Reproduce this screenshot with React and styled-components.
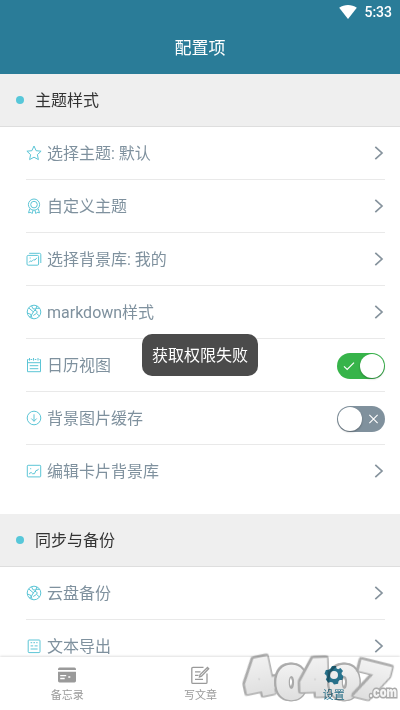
import React from 'react';
import styled, { createGlobalStyle } from 'styled-components';

const ICONS = {
	star: <path d="M8 1l2.100 4.700 5 .5-3.700 3.400 1 5L8 12.200l-4.400 2.400 1-5L.9 6.200l5-.5z" />,
	award: (
		<>
			<circle cx="8" cy="6.6" r="5.6" />
			<circle cx="8" cy="6.6" r="3.3" />
			<path d="M3.800 10.700l-1.300 4.100 2.400-.5 1.200 1.300 1-3.500M12.200 10.700l1.300 4.100-2.400-.5-1.200 1.300-1-3.500" />
		</>
	),
	gallery: (
		<>
			<rect x="1" y="4.4" width="11.6" height="9.8" rx="1.2" />
			<path d="M3.200 2.300h10.300c.9 0 1.300.5 1.300 1.300V12M3.200 11.400l1.200-1.500 1.500.5 2-2 1 .8 2-2.400" />
			<path d="M3.700 7h1" />
		</>
	),
	globe: (
		<>
			<circle cx="8" cy="8" r="6.8" />
			<path d="M2.800 4l5 4.200M5.500 1.800l1.500 3 3 .3.600-3M13.500 4.400l-3-.2-3.400 4L5 12l-1.800 1M9 6.200l2.300 1.500-.8 1.700 2.800 2.500M1.500 9l3.500 1.500 1 3.500M7.200 11.500l3.200-2" />
		</>
	),
	calendar: (
		<>
			<path d="M2.500 2.500h-1v12.200h13V2.500h-1M4.600 2.500h1.600M8.800 2.500h1.500M1.500 5.700h13M3.700 8.700h8.600M3.700 11.700h8.600" />
			<path d="M3.500 1v2.600M7.500 1v2.600M12 1v2.600" />
		</>
	),
	download: (
		<>
			<circle cx="8" cy="8" r="6.8" />
			<path d="M8 4.300v7M5.300 8.500L8 11.300l2.700-2.800" />
		</>
	),
	image: (
		<>
			<rect x="1.3" y="2.3" width="13.400" height="11.600" rx=".8" />
			<path d="M3.600 11.200v-1l1.600-.7 1.300 1.200h2L10 7.500l1.500-.2 1-1.500M4.200 5.700h1" />
		</>
	),
	text: (
		<>
			<rect x="2.2" y="2" width="11.800" height="12.600" rx=".8" />
			<path d="M4.600 4.700h1.600M7.400 4.700H9M10.200 4.700h1.400M4.600 7.900h2.600M8.600 7.900h3M4.600 11h7" />
		</>
	),
};

const sections = [
	{
		title: '主题样式',
		items: [
			{ icon: 'star', label: '选择主题: 默认' },
			{ icon: 'award', label: '自定义主题' },
			{ icon: 'gallery', label: '选择背景库: 我的' },
			{ icon: 'globe', label: 'markdown样式' },
			{ icon: 'calendar', label: '日历视图', toggle: true, on: true },
			{ icon: 'download', label: '背景图片缓存', toggle: true, on: false },
			{ icon: 'image', label: '编辑卡片背景库' },
		],
	},
	{
		title: '同步与备份',
		items: [
			{ icon: 'globe', label: '云盘备份' },
			{ icon: 'text', label: '文本导出' },
		],
	},
];

const Switch = ({ on }) => (
	<Track $on={on}>
		<Mark $on={on} viewBox="0 0 12 12">
			{on ? <path d="M1 6.300l3.200 3.200L11 2.700" /> : <path d="M1.500 1.500l9 9M10.500 1.500l-9 9" />}
		</Mark>
		<Knob />
	</Track>
);

const SettingRow = ({ icon, label, toggle, on, last }) => (
	<Row $last={last}>
		<RowIcon viewBox="0 0 16 16">{ICONS[icon]}</RowIcon>
		<Label>{label}</Label>
		{toggle ? (
			<Switch on={on} />
		) : (
			<Chevron viewBox="0 0 10 14">
				<path d="M1.300 .8L8 7l-6.700 6.200" />
			</Chevron>
		)}
	</Row>
);

const Watermark = () => (
	<Logo viewBox="0 0 160 56">
		<defs>
			<linearGradient id="shine" x1="0" y1="0" x2="0" y2="1">
				<stop offset="0" stopColor="#f6f6f6" />
				<stop offset="1" stopColor="#dadada" />
			</linearGradient>
		</defs>
		<Digit transform="translate(8 43) rotate(-12) scale(.96 1.05)">4</Digit>
		<Digit transform="translate(37 44) scale(.9 .95)">0</Digit>
		<Digit transform="translate(61 41) rotate(-2) scale(.96 1.05)">4</Digit>
		<Digit transform="translate(90 44) scale(.9 .95)">0</Digit>
		<Digit transform="translate(114 40) rotate(14) scale(1.1 1.02)">7</Digit>
		<Domain x="129" y="43" textLength="28" lengthAdjust="spacingAndGlyphs">.com</Domain>
	</Logo>
);

const App = () => (
	<Screen>
		<GlobalStyle />
		<Header>
			<StatusBar>
				<Wifi viewBox="0 0 18 14">
					<path d="M.2 2.800C5.400-.9 12.600-.9 17.800 2.800L9 14z" />
				</Wifi>
				<span>5:33</span>
			</StatusBar>
			<Title>配置项</Title>
		</Header>
		<Content>
			{sections.map(({ title, items }) => (
				<Section key={title}>
					<SectionHead>
						<Dot />
						<Heading>{title}</Heading>
					</SectionHead>
					<List>
						{items.map((item, i) => (
							<SettingRow key={item.label} {...item} last={i === items.length - 1} />
						))}
					</List>
				</Section>
			))}
		</Content>
		<TabBar>
			<Tab>
				<TabIcon viewBox="0 0 20 20">
					<path d="M1 4.500Q1 2.500 2.500 2.500h15q1.500 0 1.500 2V5H1z" fill="currentColor" />
					<path d="M1 6.700h18v9q0 1.800-1.500 1.800h-15Q1 17.500 1 15.700z" fill="currentColor" />
					<path d="M3.200 10.700h6M3.200 13.500h4.500M11.300 12h2" stroke="#fff" strokeWidth="1.300" />
				</TabIcon>
				备忘录
			</Tab>
			<Tab>
				<TabIcon viewBox="0 0 20 20">
					<g fill="none" stroke="currentColor" strokeWidth="1.300">
						<path d="M13.500 2.300H3Q1.800 2.300 1.800 3.500v13.700q0 1.200 1.200 1.200h12.800q1.200 0 1.200-1.200V8.500" />
						<path d="M5 6.800h5.500M5 10.300h3.500M5 14.300h8M9.500 12l.5-2.200 7.500-7.300 1.200 1.200-7.200 7.500z" />
					</g>
				</TabIcon>
				写文章
			</Tab>
			<Tab $active>
				<TabIcon viewBox="0 0 20 20">
					<path
						fill="currentColor"
						fillRule="evenodd"
						d="M8 1h4l.6 2.500 1.600.7L16.500 3 19 6l-1.500 2.100.4 1.700 1.600 1.200-1.200 4-2.600.1-1.300 1.300-.3 2.300-4.100.7-1.400-2-1.800-.4-2.500.7-2.500-3.200 1-2.300-.4-1.800L.5 8.700l1.400-3.800 2.600-.1L6.500 3.600zM10 6a4 4 0 100 8 4 4 0 000-8z"
					/>
				</TabIcon>
				设置
			</Tab>
		</TabBar>
		<Toast>获取权限失败</Toast>
		<Watermark />
	</Screen>
);

export default App;

const GlobalStyle = createGlobalStyle`
	* {
		box-sizing: border-box;
	}

	body {
		margin: 0;
		background: #fff;
		font-family: Roboto, 'Noto Sans CJK SC', sans-serif;
	}
`;

const Screen = styled.div`
	position: relative;
	display: flex;
	flex-direction: column;
	width: 400px;
	height: 710px;
	overflow: hidden;
	background: #fff;
`;

const Header = styled.header`
	flex: none;
	height: 74px;
	background: #2a7c98;
	color: #fff;
`;

const StatusBar = styled.div`
	display: flex;
	align-items: center;
	justify-content: flex-end;
	gap: 7px;
	height: 24px;
	padding-right: 8px;
	font-size: 14px;
	font-weight: 500;
`;

const Wifi = styled.svg`
	width: 18px;
	height: 14px;
	fill: #fff;
`;

const Title = styled.div`
	height: 48px;
	line-height: 48px;
	text-align: center;
	font-size: 17px;
`;

const Content = styled.main`
	flex: 1;
	min-height: 0;
	overflow: hidden;
`;

const Section = styled.section`
	margin-bottom: 16px;
`;

const SectionHead = styled.div`
	display: flex;
	align-items: center;
	gap: 11px;
	height: 53px;
	padding-left: 16px;
	background: #efefef;
	border-bottom: 1px solid #dedede;
	font-size: 16px;
	color: #333;
`;

const Heading = styled.span`
	padding-bottom: 2px;
`;

const Dot = styled.span`
	width: 8px;
	height: 8px;
	border-radius: 50%;
	background: #57c7d9;
`;

const List = styled.div`
	padding: 0 15px 0 26px;
`;

const Row = styled.div`
	display: flex;
	align-items: center;
	height: 53px;
	border-bottom: 1px solid ${({ $last }) => ($last ? 'transparent' : '#e9e9e9')};
	font-size: 16px;
	color: #7f919e;
`;

const RowIcon = styled.svg`
	width: 16px;
	height: 16px;
	margin-right: 5px;
	fill: none;
	stroke: #5cc5d6;
	stroke-width: 1;
	stroke-linejoin: round;
`;

const Label = styled.span`
	flex: 1;
	padding-bottom: 2px;
`;

const Chevron = styled.svg`
	width: 10px;
	height: 14px;
	margin-right: 1px;
	fill: none;
	stroke: #86939d;
	stroke-width: 1.7;
`;

const Track = styled.div`
	display: flex;
	flex-direction: ${({ $on }) => ($on ? 'row' : 'row-reverse')};
	align-items: center;
	justify-content: space-between;
	width: 48px;
	height: 26px;
	margin-top: 2px;
	padding: 1px;
	border-radius: 13px;
	background: ${({ $on }) => ($on ? '#37b44a' : '#80919d')};
`;

const Mark = styled.svg`
	width: ${({ $on }) => ($on ? 12 : 11)}px;
	height: 12px;
	margin: 0 5px;
	fill: none;
	stroke: #fff;
	stroke-width: 1.2;
`;

const Knob = styled.span`
	width: 24px;
	height: 24px;
	border-radius: 50%;
	background: #fff;
	box-shadow: 0 1px 2px rgba(0, 0, 0, 0.3);
`;

const TabBar = styled.nav`
	flex: none;
	display: flex;
	height: 53px;
	background: #fff;
	box-shadow: 0 -1px 2px rgba(0, 0, 0, 0.12);
`;

const Tab = styled.div`
	flex: 1;
	display: flex;
	flex-direction: column;
	align-items: center;
	padding-top: 8px;
	padding-left: 1px;
	font-size: 11px;
	line-height: 22px;
	color: ${({ $active }) => ($active ? '#2a7c98' : '#9a9a9a')};
`;

const TabIcon = styled.svg`
	flex: none;
	width: 20px;
	height: 20px;
`;

const Toast = styled.div`
	position: absolute;
	top: 334px;
	left: 142px;
	width: 116px;
	height: 42px;
	border-radius: 10px;
	background: #4b4b4b;
	color: #fff;
	font-size: 16px;
	line-height: 43px;
	text-align: center;
`;

const Logo = styled.svg`
	position: absolute;
	right: 0;
	bottom: 0;
	width: 160px;
	height: 56px;
	overflow: visible;
	mix-blend-mode: multiply;
`;

/* pale fattened glyphs with a grey rim around them */
const Digit = styled.text`
	font-family: Inter, 'Open Sans', sans-serif;
	font-size: 45px;
	font-weight: 900;
	fill: url(#shine);
	stroke: url(#shine);
	stroke-width: 4.5;
	filter: drop-shadow(1.2px 0 0 #aaa) drop-shadow(-1.2px 0 0 #aaa) drop-shadow(0 1.2px 0 #aaa)
		drop-shadow(0 -1.2px 0 #aaa);
`;

const Domain = styled.text`
	font-family: Inter, 'Open Sans', sans-serif;
	font-size: 14px;
	font-weight: 900;
	fill: #f4f4f4;
	stroke: #aaa;
	stroke-width: 3;
	paint-order: stroke;
`;
